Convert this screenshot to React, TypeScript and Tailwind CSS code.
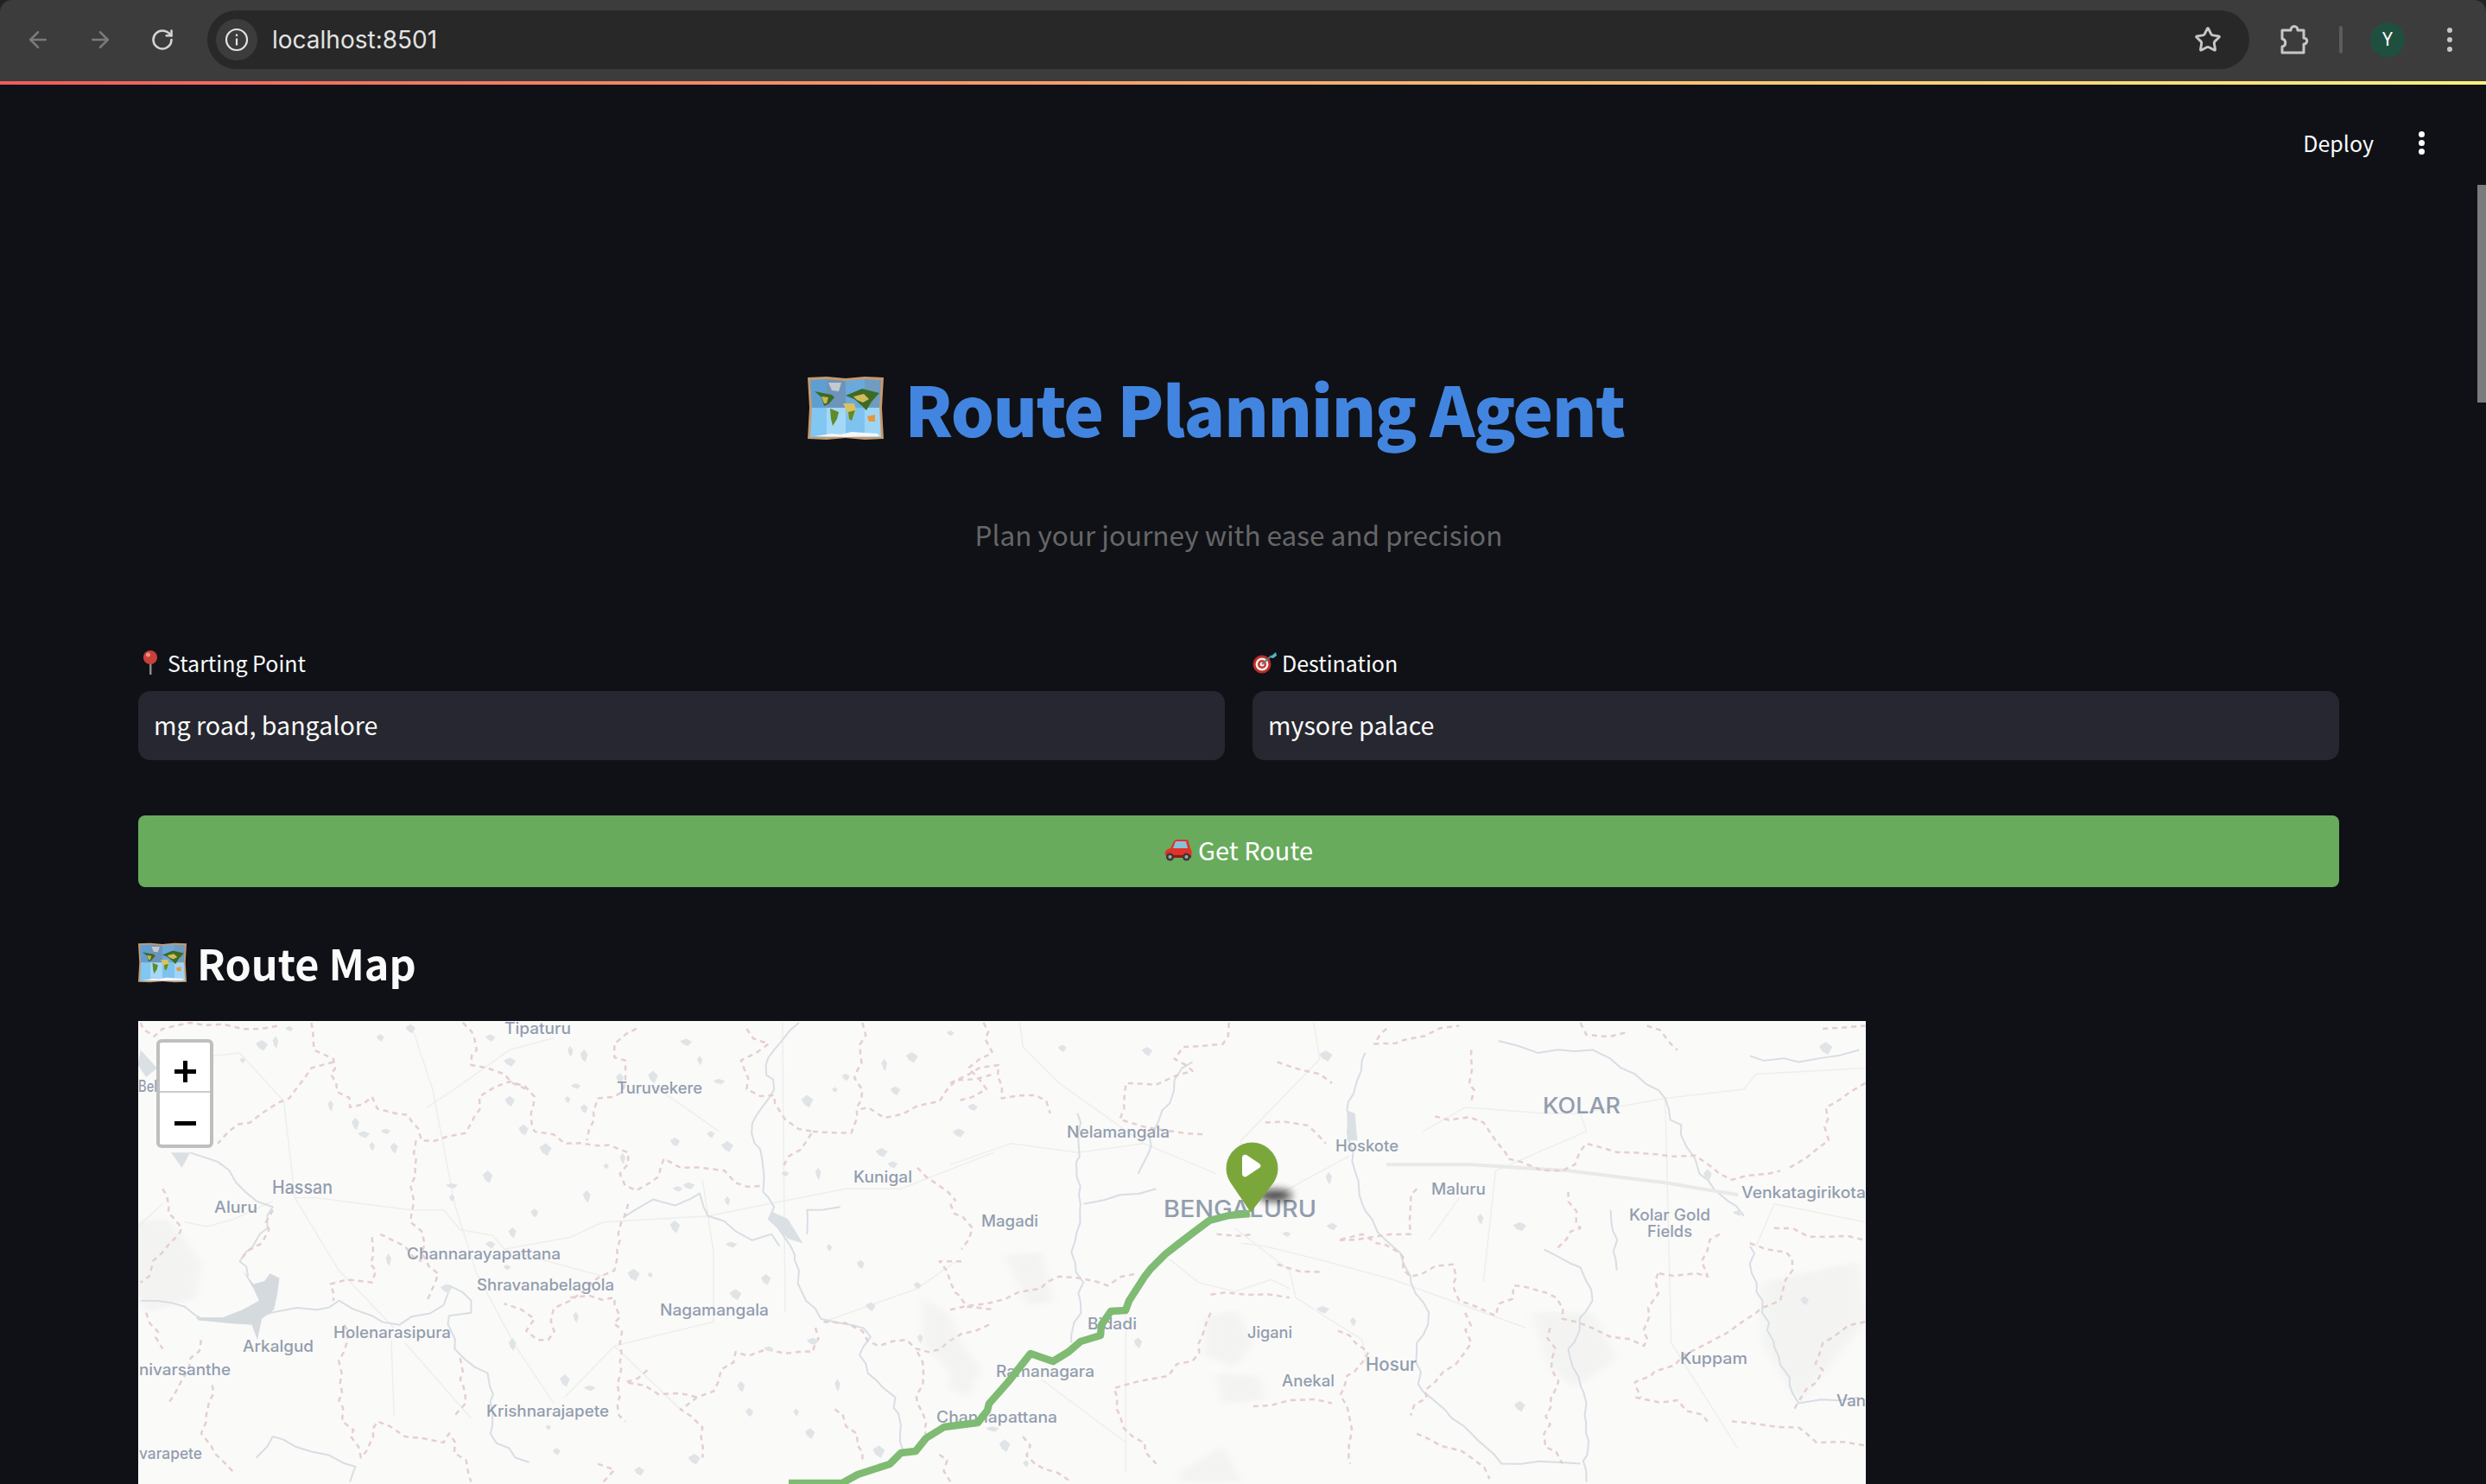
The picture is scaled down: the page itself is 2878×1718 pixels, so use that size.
import { ArrowLeft, ArrowRight, RotateCw, Star } from "lucide-react";

const boundariesA = [
  "M20,40 L45,85 L60,60 L110,40 L170,45 L240,60 L270,50",
  "M330,40 L335,130 L370,160 L375,240 L400,320 L440,285 L450,325 L505,345 L530,430 L610,405 L635,285 L690,235 L735,285 L735,400 L770,410 L790,440 L870,445 L905,470 L890,540 L920,595 L960,550 L970,490 L1000,520 L1080,530 L1100,570 L1150,580",
  "M605,40 L630,130 L620,180 L680,210 L720,260",
  "M920,60 L880,110 L880,155 L900,165 L900,230 L880,285 L850,290 L830,430",
  "M1120,60 L1160,110 L1110,165 L1120,260 L1170,280 L1190,360 L1240,400 L1185,520 M1240,400 L1310,405 L1320,330 L1340,320 L1370,355 L1430,315 L1470,300 L1500,230 L1568,210",
  "M1330,40 L1320,320",
  "M370,170 L330,190 L290,290 L240,340 L180,400 L160,440",
  "M520,430 L515,620 L510,700 L530,730 L530,800 L560,870 L540,960",
  "M455,740 L500,780 L530,830 M440,750 L440,900 L395,890 L365,905 L370,960",
  "M905,640 L890,760 L880,860 L800,960 L770,985 L760,1090 L740,1090 L720,1060 L735,1020 L680,970",
  "M800,950 L880,950 L890,1100 L885,1300 L900,1360",
  "M390,1040 L385,1200 L380,1290 L420,1480 L450,1360 L500,1410 L570,1430 L580,1400 L620,1560",
  "M1245,1050 L1240,1130 L1190,1135 L1100,1130 L1060,1260 L1030,1280 L1000,1320 L1040,1380 L1040,1480",
  "M1260,1030 L1330,1060 L1360,1110 L1410,1090 L1450,1130 L1510,1070 L1560,1040",
  "M260,660 L240,770 L200,830",
  "M60,590 L70,670 L95,720 L60,800 L20,900",
  "M30,1000 L60,1120 M130,1090 L70,1300",
  "M150,1240 L130,1400 L190,1530",
  "M600,1150 L600,1220 L610,1300 L590,1340",
  "M940,1190 L900,1230 L960,1270 L1030,1280",
  "M1430,1130 L1440,1240 L1430,1300 L1450,1420 M1470,1470 L1490,1560",
  "M1510,830 L1470,830 L1490,900 L1520,980 L1568,990 M1490,640 L1530,720 L1510,790",
  "M1430,520 L1470,580 L1500,630",
  "M850,1500 L880,1520 L860,1560 M1280,1320 L1320,1400 L1330,1500",
];

const riversA = [
  "M1215,40 L1170,130 L1155,180 L1170,260 L1130,375 L1150,520 L1150,600 L1170,650 L1160,690 L1200,780 L1215,860 L1220,930 L1255,1020 L1310,1040 L1345,1080 L1325,1140 L1340,1200 L1390,1280 L1405,1460",
  "M900,680 L950,625 L990,645 L1035,605 L1050,680 L1100,730 L1130,760 L1165,740 L1180,780",
  "M1230,740 L1230,660 L1290,650",
  "M20,960 L100,980 L130,1020 L200,1025 L270,995 L340,990 L380,960 L440,1010 L490,1040 L570,975 L580,910 L620,960 L620,1000 L580,1010 L590,1120 L650,1200 L660,1270 L655,1400 L700,1480 L725,1495",
  "M110,470 L160,500 L210,600 L260,650 L250,720 L200,830 L215,880",
  "M260,1410 L230,1480 M260,1410 L330,1460 L410,1510 L400,1560",
];

const roadsA = [
  "M150,150 L200,140 L280,300 L300,620 L340,620 L510,660 L570,660 L600,725 L660,745 L680,790 L800,750 L860,700 L1050,680 L1160,640 L1300,590 L1400,590 L1568,470",
  "M100,700 L140,715 L190,690 L260,630",
  "M510,40 L550,260 L590,640 L630,870 L700,1110 L770,1300",
  "M880,1110 L1060,1030 L1060,800 L1040,560 M500,1100 L620,1350",
  "M475,1090 L480,1340 M540,320 L590,260 L690,130 L770,90 M1070,400 L1000,310 L950,250",
  "M680,790 L860,880 M790,1280 L880,1110 L1000,1320 M300,620 L380,860 L480,1050",
  "M0,740 L60,640 M1185,40 L1190,1000 M1260,1030 L1430,920 L1500,830",
];

const boundariesB = [
  "M55,40 L70,140 L30,190 L60,260 L10,300",
  "M0,240 L80,180 L85,290 L140,280 L165,340",
  "M460,40 L450,110 L385,120 L370,160 L400,200 L340,245 L290,240 L280,360 L350,395 L420,410",
  "M520,370 L590,380 L620,440 M540,170 L610,210 L630,240 M720,60 L700,110 L840,50",
  "M860,130 L860,300 M800,350 L880,370 L900,430 L920,490 L1010,530 L1050,440 L1130,470 L1230,480 L1290,560 L1370,530",
  "M1510,240 L1445,320 L1450,430 L1385,520",
  "M1020,600 L1040,720 L1000,790",
  "M770,590 L760,740 L640,760 L680,740 L740,800 L760,880 L830,840 L840,960 L900,1010 L930,910 L1000,950 L1010,1020 L1090,1080 L1145,1110 L1160,960 L1170,860",
  "M1270,740 L1240,830 L1250,880 L1170,870 M1320,770 L1380,800 L1390,860 L1370,960 L1300,1040 L1260,1090 L1210,1140 L1130,1230 L1140,1280",
  "M1360,720 L1510,760",
  "M0,990 L60,970 L150,920 L180,880 L260,910 L310,870",
  "M430,940 L560,950 M540,840 L610,865 M440,740 L500,740",
  "M430,1000 L400,1160 L330,1220 L270,1250 L280,1340 L340,1500",
  "M500,1310 L560,1290 L630,1300 M640,1060 L690,1130 L650,1250 L660,1500",
  "M850,1000 L860,1100 L800,1230 L760,1340 M770,1400 L860,1480 L890,1550",
  "M990,1050 L1000,1250 L980,1400 L1010,1500",
  "M1290,1360 L1400,1380 L1430,1430 L1510,1440 M1250,1360 L1200,1290 L1130,1280",
  "M1510,1030 L1440,1100 L1430,1230 L1390,1330",
  "M120,1410 L140,1500 L200,1560",
  "M1040,40 L1050,80 L1120,70 M1150,50 L1200,130 M1440,60 L1510,50",
];

const riversB = [
  "M905,100 L970,140 L1060,130 L1130,210 L1180,290 L1215,450 L1250,560 L1310,680",
  "M1320,150 L1400,170 L1500,130",
  "M685,140 L655,330 L665,470 L680,640 L730,780 L790,1000 L770,1100 L780,1260 L860,1400 L910,1500 L1040,1500",
  "M1090,660 L1100,860 M980,790 L1040,850 L1060,960 L1020,1120 L1050,1300 L1050,1560",
  "M1320,780 L1340,1000 L1400,1300 L1500,1280",
  "M210,340 L215,640 L200,800 L220,900 L200,1100",
  "M400,170 L370,230 L350,330 L310,540 M220,640 L280,610 L340,590",
];

const roadsB = [
  "M0,510 L100,440 L210,470 L320,440 L440,540",
  "M115,40 L120,120 L180,240 L320,440",
  "M470,720 L560,860 L570,950 L680,1090 L690,1200",
  "M480,770 L520,780 L620,830 L730,890 L950,1050",
  "M360,820 L410,900 L470,930 L530,890 L560,920",
  "M660,480 L540,610 M600,40 L610,160 L480,430 L490,680",
  "M780,400 L850,320 L980,340 L1040,340 L1180,290 L1310,260 L1330,210 L1510,190",
  "M1040,340 L1050,400 L900,530 L880,900",
  "M840,620 L790,760 M150,1220 L290,1430 M290,1000 L290,1530",
  "M1180,290 L1190,1100 L1300,1450 M1510,700 L1360,640 L1330,780",
];

const highwayB = "M720,510 L860,510 L1020,530 L1180,570 L1300,610";

const lakesA = [
  [205, 165], [455, 90], [510, 60], [240, 115], [265, 105], [290, 60], [655, 90], [690, 170], [800, 135], [825, 150],
  [810, 250], [1010, 105], [1035, 165], [890, 225], [950, 220], [1070, 235], [795, 295], [825, 325], [690, 300], [1230, 300],
  [1280, 262], [1300, 220], [1390, 265], [1420, 155], [1370, 180], [1490, 75], [1530, 320], [1505, 405], [365, 315], [410, 375],
  [465, 400], [425, 410], [440, 450], [480, 455], [650, 550], [585, 580], [585, 620], [735, 670], [715, 395], [755, 460],
  [865, 515], [1055, 410], [990, 435], [1085, 450], [1250, 540], [1190, 540], [1385, 510], [1365, 470], [895, 490], [830, 615],
  [995, 590], [1015, 580], [1085, 630], [695, 735], [990, 715], [1092, 775], [1270, 785], [1327, 840], [1155, 890], [915, 875],
  [945, 875], [1430, 910], [1345, 980], [1100, 940], [470, 825], [685, 850], [655, 775], [575, 920], [810, 1015], [695, 1105],
  [1160, 1120], [1240, 1095], [1435, 1085], [1110, 1245], [790, 1225], [835, 1250], [1210, 1330], [1125, 1330], [1235, 1400], [1360, 1460],
  [760, 1380], [775, 1460], [925, 1525], [1025, 1485], [1285, 1240],
];

const lakesB = [
  [40, 320], [185, 125], [325, 135], [620, 150], [625, 555], [555, 740], [630, 715], [940, 715], [875, 690],
  [1250, 545], [1300, 670], [615, 990], [665, 1030], [310, 1100], [90, 1440], [70, 1385], [125, 1500], [1410, 960], [940, 1310], [1445, 125],
];

const patches = [
  "M0,700 L70,690 L130,830 L120,950 L30,1000 L0,900 Z",
  "M1440,950 L1490,1010 L1530,1200 L1480,1180 L1440,1100 Z",
];

const patchesB = [
  "M420,1020 L470,990 L500,1100 L470,1180 L420,1140 Z",
  "M440,1200 L510,1210 L520,1290 L450,1300 Z",
  "M380,1530 L450,1440 L480,1560 L380,1560 Z",
  "M90,810 L150,800 L170,960 L130,980 Z",
  "M1340,900 L1500,830 L1510,1030 L1400,1300 L1340,1100 Z",
  "M960,1000 L1060,1000 L1100,1150 L1030,1250 L990,1180 Z",
  "M0,1080 L50,1180 L30,1280 L0,1250 Z",
];

const labels = [
  { t: "Tipaturu", x: 424, y: 15, w: 77, s: 18 },
  { t: "Turuvekere", x: 554, y: 84, w: 99, s: 18 },
  { t: "Bel", x: 0, y: 82, w: 22, s: 18 },
  { t: "Hassan", x: 155, y: 200, w: 70, s: 21 },
  { t: "Aluru", x: 88, y: 222, w: 50, s: 18 },
  { t: "Channarayapattana", x: 311, y: 276, w: 178, s: 18 },
  { t: "Shravanabelagola", x: 392, y: 312, w: 159, s: 18 },
  { t: "Nagamangala", x: 604, y: 341, w: 126, s: 18 },
  { t: "Holenarasipura", x: 226, y: 367, w: 136, s: 18 },
  { t: "Arkalgud", x: 121, y: 383, w: 82, s: 18 },
  { t: "nivarsanthe", x: 1, y: 410, w: 106, s: 18 },
  { t: "Krishnarajapete", x: 403, y: 458, w: 142, s: 18 },
  { t: "varapete", x: 1, y: 507, w: 73, s: 18 },
  { t: "Kunigal", x: 828, y: 187, w: 68, s: 18 },
  { t: "Nelamangala", x: 1075, y: 135, w: 119, s: 18 },
  { t: "Magadi", x: 976, y: 238, w: 66, s: 18 },
  { t: "BENGALURU", x: 1187, y: 227, w: 177, s: 27 },
  { t: "Hoskote", x: 1386, y: 151, w: 73, s: 18 },
  { t: "KOLAR", x: 1626, y: 107, w: 90, s: 25 },
  { t: "Maluru", x: 1497, y: 201, w: 63, s: 18 },
  { t: "Venkatagirikota", x: 1856, y: 205, w: 144, s: 18 },
  { t: "Kolar Gold", x: 1726, y: 231, w: 94, s: 18 },
  { t: "Fields", x: 1747, y: 250, w: 52, s: 18 },
  { t: "Bidadi", x: 1099, y: 357, w: 57, s: 18 },
  { t: "Jigani", x: 1284, y: 367, w: 52, s: 18 },
  { t: "Ramanagara", x: 993, y: 412, w: 114, s: 18 },
  { t: "Hosur", x: 1421, y: 405, w: 59, s: 21 },
  { t: "Anekal", x: 1324, y: 423, w: 61, s: 18 },
  { t: "Kuppam", x: 1785, y: 397, w: 78, s: 18 },
  { t: "Van", x: 1966, y: 446, w: 34, s: 18 },
  { t: "Channapattana", x: 924, y: 465, w: 140, s: 18 },
];

const route =
  "M1287,223 L1263,225 L1240,231 L1220,246 L1203,259 L1189,270 L1172,287 L1165,296 L1147,324 L1143,335 L1126,336 L1115,352 L1114,364 L1091,371 L1077,383 L1059,394 L1033,385 L1007,418 L985,443 L983,451 L972,465 L933,470 L912,483 L900,498 L883,500 L870,513 L833,525 L815,535 L753,535";

// traced polylines come out too straight, so break them up a little
let seed = 11;
const rnd = () => {
  seed = (seed * 16807) % 2147483647;
  return seed / 2147483647 - 0.5;
};

const wiggle = (d: string, amp: number) =>
  d
    .split("M")
    .filter(Boolean)
    .map((run) => {
      const pts = run.split("L").map((p) => p.trim().split(",").map(Number));
      let out = `M${pts[0][0]},${pts[0][1]}`;
      for (let i = 1; i < pts.length; i++) {
        const [ax, ay] = pts[i - 1];
        const [bx, by] = pts[i];
        const n = Math.max(1, Math.round(Math.hypot(bx - ax, by - ay) / 32));
        for (let k = 1; k <= n; k++) {
          const t = k / n;
          const j = k === n ? 0 : amp;
          out += ` L${(ax + (bx - ax) * t + rnd() * j).toFixed(1)},${(ay + (by - ay) * t + rnd() * j * 1.6).toFixed(1)}`;
        }
      }
      return out;
    })
    .join(" ");

const lakeShape = ([x, y]: number[], i: number) => {
  const rx = 5 + (i % 4) * 2;
  const ry = 9 + (i % 5) * 3;
  return `M${x},${y - ry} L${x + rx},${y - ry / 4} L${x + rx / 3},${y + ry} L${x - rx / 2},${y + ry / 2} L${x - rx},${y - ry / 3} Z`;
};

const boundA = boundariesA.map((d) => wiggle(d, 16));
const boundB = boundariesB.map((d) => wiggle(d, 16));
const riverA = riversA.map((d) => wiggle(d, 12));
const riverB = riversB.map((d) => wiggle(d, 12));

function Lines({ d, color, width, dash }: { d: string[]; color: string; width: number; dash?: string }) {
  return (
    <>
      {d.map((p) => (
        <path
          key={p}
          d={p}
          fill="none"
          stroke={color}
          strokeWidth={width}
          strokeDasharray={dash}
          strokeLinejoin="round"
          vectorEffect="non-scaling-stroke"
        />
      ))}
    </>
  );
}

function RouteMap() {
  return (
    <div className="relative h-[536px] w-[2000px] overflow-hidden bg-[#fafaf9]">
      <svg viewBox="0 0 2000 536" className="block h-full w-full">
        <defs>
          <filter id="pin-shadow" x="-60%" y="-100%" width="220%" height="300%">
            <feGaussianBlur stdDeviation="5" />
          </filter>
          <filter id="patch-blur" x="-20%" y="-20%" width="140%" height="140%">
            <feGaussianBlur stdDeviation="8" />
          </filter>
        </defs>
        <g transform="translate(-10,-12) scale(0.6378,0.3497)">
          {patches.map((p) => (
            <path key={p} d={p} fill="#f3f4f2" filter="url(#patch-blur)" />
          ))}
          <Lines d={roadsA} color="#eeeeec" width={1.5} />
          <Lines d={riverA} color="#d8dee3" width={2} />
          <Lines d={boundA} color="#e6ced3" width={2.5} dash="6 5" />
          <path
            d="M205,860 L225,905 L245,895 L255,870 L272,885 L268,940 L262,990 L240,1020 L232,1090 L222,1040 L180,1035 L125,1025 L120,1015 L170,1015 L205,990 L235,960 L225,920 Z"
            fill="#d5dadf"
          />
          <path d="M1165,665 L1195,690 L1222,770 L1195,755 L1160,690 Z" fill="#dbe0e4" />
          <path d="M20,130 L50,190 L30,220 L15,180 Z" fill="#dbe0e4" />
          <path d="M75,470 L110,470 L95,520 Z" fill="#dbe0e4" />
          {lakesA.map((l, i) => (
            <path key={i} d={lakeShape(l, i)} fill="#e0e4e7" />
          ))}
        </g>
        <g transform="translate(940,-12) scale(0.7015,0.3497)">
          {patchesB.map((p) => (
            <path key={p} d={p} fill="#f3f4f2" filter="url(#patch-blur)" />
          ))}
          <Lines d={roadsB} color="#eeeeec" width={1.5} />
          <Lines d={riverB} color="#d8dee3" width={2} />
          <Lines d={[highwayB]} color="#e8e9e8" width={4} />
          <Lines d={boundB} color="#e6ced3" width={2.5} dash="6 5" />
          <path d="M655,330 L668,340 L672,430 L655,430 Z" fill="#dbe0e4" />
          {lakesB.map((l, i) => (
            <path key={i} d={lakeShape(l, i)} fill="#e0e4e7" />
          ))}
        </g>
        {labels.map((l) => (
          <text
            key={l.t}
            x={l.x}
            y={l.y}
            textLength={l.w}
            lengthAdjust="spacingAndGlyphs"
            fontSize={l.s}
            fontWeight={500}
            fontFamily="Inter, sans-serif"
            fill="#929dae"
          >
            {l.t}
          </text>
        ))}
        <path d={route} fill="none" stroke="#7fbb72" strokeWidth={8.5} strokeLinejoin="round" />
        <ellipse cx={1316} cy={202} rx={20} ry={7} fill="#111" opacity={0.75} filter="url(#pin-shadow)" />
        <path d="M1288,221 L1265,187 A29.500,29.500 0 1 1 1314,187 Z" fill="#7ba63a" stroke="#7ba63a" strokeLinejoin="round" />
        <path
          d="M1278,158 C1278,155 1281,154 1283,155 L1298,165 C1300,167 1300,169 1298,170 L1283,180 C1281,181 1278,180 1278,177 Z"
          fill="#ffffff"
        />
      </svg>
      <div className="absolute left-[21px] top-[21px] flex w-[66px] flex-col overflow-hidden rounded-[6px] border-4 border-[#bfbfbf] bg-white text-black">
        <div className="flex h-[58px] items-center justify-center border-b-2 border-[#cccccc] pt-[10px]">
          <svg width="25" height="25" viewBox="0 0 25 25">
            <rect x="10" width="5" height="25" fill="#000" />
            <rect y="10" width="25" height="5" fill="#000" />
          </svg>
        </div>
        <div className="flex h-[60px] items-center justify-center pt-[12px]">
          <svg width="25" height="6" viewBox="0 0 25 6">
            <rect width="25" height="5" fill="#000" />
          </svg>
        </div>
      </div>
    </div>
  );
}

function WorldMapEmoji({ className }: { className: string }) {
  return (
    <svg viewBox="0 0 88 75" className={className} preserveAspectRatio="none">
      <path d="M0,2 L22,1 L44,3 L66,1 L88,2 L86,37 L88,73 L66,74 L44,72 L22,74 L0,73 L2,37 Z" fill="#c69a6e" />
      <path d="M3,5 L22,4 L22,37 L5,37 Z" fill="#5f9ed2" />
      <path d="M22,4 L44,6 L44,37 L22,37 Z" fill="#6d94ba" />
      <path d="M44,6 L66,4 L66,37 L44,37 Z" fill="#6aa9dc" />
      <path d="M66,4 L85,5 L83,37 L66,37 Z" fill="#6f9cc0" />
      <path d="M5,37 L22,37 L22,71 L3,71 Z" fill="#82c6f2" />
      <path d="M22,37 L44,37 L44,69 L22,71 Z" fill="#a3d8f7" />
      <path d="M44,37 L66,37 L66,71 L44,69 Z" fill="#7ec2f0" />
      <path d="M66,37 L83,37 L85,71 L66,71 Z" fill="#9ed5f6" />
      <path d="M24,8 L39,8 L36,18 L28,17 Z" fill="#c4c9cd" />
      <path d="M8,18 L28,22 L31,25 L24,33 L19,35 L16,25 Z" fill="#3f6a22" />
      <path d="M16,24 L24,25 L22,32 L19,32 Z" fill="#c9b552" />
      <path d="M26,38 L36,42 L34,50 L29,58 L27,50 Z" fill="#5f8a2a" />
      <path d="M44,23 L63,15 L83,20 L74,30 L68,40 L63,35 L54,27 Z" fill="#3f6a22" />
      <path d="M53,24 L65,21 L71,27 L64,31 L57,28 Z" fill="#d1bb5a" />
      <path d="M41,32 L54,32 L56,40 L51,52 L48,50 L45,40 Z" fill="#d9c25f" />
      <path d="M47,42 L55,40 L51,52 L48,50 Z" fill="#5f8a2a" />
      <path d="M69,47 L78,45 L78,53 L71,53 Z" fill="#e8963a" />
      <path d="M8,70 L28,67 L38,68 L51,65 L81,67 L83,70 L44,71 Z" fill="#f2f7fb" />
    </svg>
  );
}

function PinEmoji() {
  return (
    <svg viewBox="0 0 18 28" className="ml-[5px] mr-[11px] h-[28px] w-[18px]">
      <rect x="8" y="10" width="2.500" height="18" fill="#8b8b8b" />
      <circle cx="9" cy="8" r="8" fill="#c8403a" />
      <circle cx="6.500" cy="5" r="2.500" fill="#ea8f88" />
    </svg>
  );
}

function DartEmoji() {
  return (
    <svg viewBox="0 0 28 26" className="mr-[6px] h-[26px] w-[28px]">
      <circle cx="11" cy="15" r="10.500" fill="#b82d27" />
      <circle cx="11" cy="15" r="7.500" fill="#f4f0ee" />
      <circle cx="11" cy="15" r="5" fill="#c9352e" />
      <circle cx="11" cy="15" r="2.500" fill="#f4f0ee" />
      <path d="M11,15 L22,5" stroke="#6a7478" strokeWidth="2" />
      <path d="M20,7 L27,1 L28,5 L24,8 Z" fill="#55b6c4" />
    </svg>
  );
}

function CarEmoji() {
  return (
    <svg viewBox="0 0 32 26" className="mr-[7px] h-[26px] w-[32px]">
      <path d="M1,19 C0,14 3,12 7,11 L11,3 C12,1 14,1 16,1 L25,1 C27,1 28,2 28,4 L30,11 C32,14 32,17 31,20 Z" fill="#e2332a" />
      <path d="M13,3 L25,3 L27,11 L10,11 Z" fill="#86c2d8" />
      <rect x="2" y="19" width="29" height="3" fill="#8e1a14" />
      <circle cx="6.500" cy="21" r="4.500" fill="#3a3a3a" />
      <circle cx="25.500" cy="21" r="4.500" fill="#3a3a3a" />
      <circle cx="6.500" cy="21" r="2" fill="#a7a7a7" />
      <circle cx="25.500" cy="21" r="2" fill="#a7a7a7" />
    </svg>
  );
}

function BrowserBar() {
  return (
    <div className="flex h-[94px] shrink-0 items-start rounded-t-[14px] bg-[#3c3c3c] pl-[8px] pr-[22px] pt-[12px]">
      <div className="flex h-[68px] w-[72px] items-center justify-center text-[#7a7a7a]">
        <ArrowLeft size={30} strokeWidth={2} />
      </div>
      <div className="flex h-[68px] w-[72px] items-center justify-center text-[#7a7a7a]">
        <ArrowRight size={30} strokeWidth={2} />
      </div>
      <div className="flex h-[68px] w-[72px] items-center justify-center text-[#d4d4d4]">
        <RotateCw size={28} strokeWidth={2.2} />
      </div>
      <div className="ml-[16px] flex h-[68px] flex-1 items-center rounded-full bg-[#282828] pl-[10px] pr-[32px]">
        <div className="flex h-[48px] w-[48px] items-center justify-center rounded-full bg-[#3c3c3c]">
          <svg width="28" height="28" viewBox="0 0 28 28" fill="none" stroke="#e3e3e3" strokeWidth="2.200">
            <circle cx="14" cy="14" r="12" />
            <path d="M14 12.500v8M14 7.500v2.500" />
          </svg>
        </div>
        <span className="ml-[17px] flex-1 font-['Inter'] text-[28px] leading-[34px] text-[#e3e3e3]">localhost:8501</span>
        <Star size={32} strokeWidth={2.2} className="text-[#c7c7c7]" />
      </div>
      <div className="flex h-[68px] w-[104px] items-center justify-center">
        <svg width="34" height="36" viewBox="0 0 34 36" fill="none" stroke="#c7c7c7" strokeWidth="3" strokeLinejoin="round">
          <path d="M3 7h10c0-6 8-6 8 0h7v9c5 0 5 7 0 7v10H3v-7c5-1 5-8 0-9z" />
        </svg>
      </div>
      <div className="mt-[18px] h-[32px] w-[4px] rounded-full bg-[#5c5c5c]" />
      <div className="flex h-[68px] w-[104px] items-center justify-center">
        <div className="flex h-[40px] w-[40px] items-center justify-center rounded-full bg-[#1f4f3f] font-['Noto_Sans'] text-[21px] text-white">
          Y
        </div>
      </div>
      <div className="flex h-[68px] w-[40px] flex-col items-center justify-center gap-[5px]">
        <span className="h-[6px] w-[6px] rounded-full bg-[#c7c7c7]" />
        <span className="h-[6px] w-[6px] rounded-full bg-[#c7c7c7]" />
        <span className="h-[6px] w-[6px] rounded-full bg-[#c7c7c7]" />
      </div>
    </div>
  );
}

function Field({ label, value, icon }: { label: string; value: string; icon: React.ReactNode }) {
  return (
    <div className="flex flex-col">
      <div className="flex h-[40px] items-center text-[25px] text-[#fafafa]">
        {icon}
        <span className="leading-[40px]">{label}</span>
      </div>
      <div className="mt-[13px] flex h-[80px] items-center rounded-[14px] bg-[#262730] px-[18px] pb-[2px] text-[28.6px] text-[#fafafa]">
        {value}
      </div>
    </div>
  );
}

export default function App() {
  return (
    <div className="flex h-[1718px] w-[2878px] flex-col overflow-hidden bg-[#222222] font-['Noto_Sans_CJK_SC',sans-serif]">
      <BrowserBar />
      <div className="h-[4px] shrink-0 bg-gradient-to-r from-[#ef5c5b] to-[#fff07e]" />
      <div className="relative flex-1 overflow-hidden bg-[#0f1116] pl-[160px] pr-[170px] pt-[324px]">
        <div className="absolute right-[130px] top-[47px] text-[25px] leading-[40px] text-[#fafafa]">Deploy</div>
        <div className="absolute right-[71px] top-[54px] flex flex-col gap-[3px]">
          <span className="h-[7px] w-[7px] rounded-full bg-white" />
          <span className="h-[7px] w-[7px] rounded-full bg-white" />
          <span className="h-[7px] w-[7px] rounded-full bg-white" />
        </div>
        <div className="absolute right-0 top-[116px] h-[252px] w-[10px] bg-[#7b7b7b]" />

        <div className="flex h-[100px] items-center justify-center pr-[52px]">
          <WorldMapEmoji className="mr-[24px] h-[75px] w-[88px]" />
          <h1 className="text-[79px] font-black leading-[100px] tracking-[-1.6px] text-[#4285e0]">Route Planning Agent</h1>
        </div>
        <p className="mt-[71px] text-center text-[31.5px] leading-[50px] text-[#666666]">
          Plan your journey with ease and precision
        </p>

        <div className="mt-[104px] grid grid-cols-2 gap-8">
          <Field label="Starting Point" value="mg road, bangalore" icon={<PinEmoji />} />
          <Field label="Destination" value="mysore palace" icon={<DartEmoji />} />
        </div>

        <div className="mt-[64px] flex h-[83px] items-center justify-center rounded-[8px] bg-[#68ab5d] pb-[4px] text-[29px] text-white">
          <CarEmoji />
          Get Route
        </div>

        <div className="mt-[52px] flex h-[70px] items-center">
          <WorldMapEmoji className="mr-[12px] h-[47px] w-[56px]" />
          <h2 className="text-[48.5px] font-bold leading-[70px] text-[#fafafa]">Route Map</h2>
        </div>

        <div className="mt-[33px]">
          <RouteMap />
        </div>
      </div>
    </div>
  );
}
